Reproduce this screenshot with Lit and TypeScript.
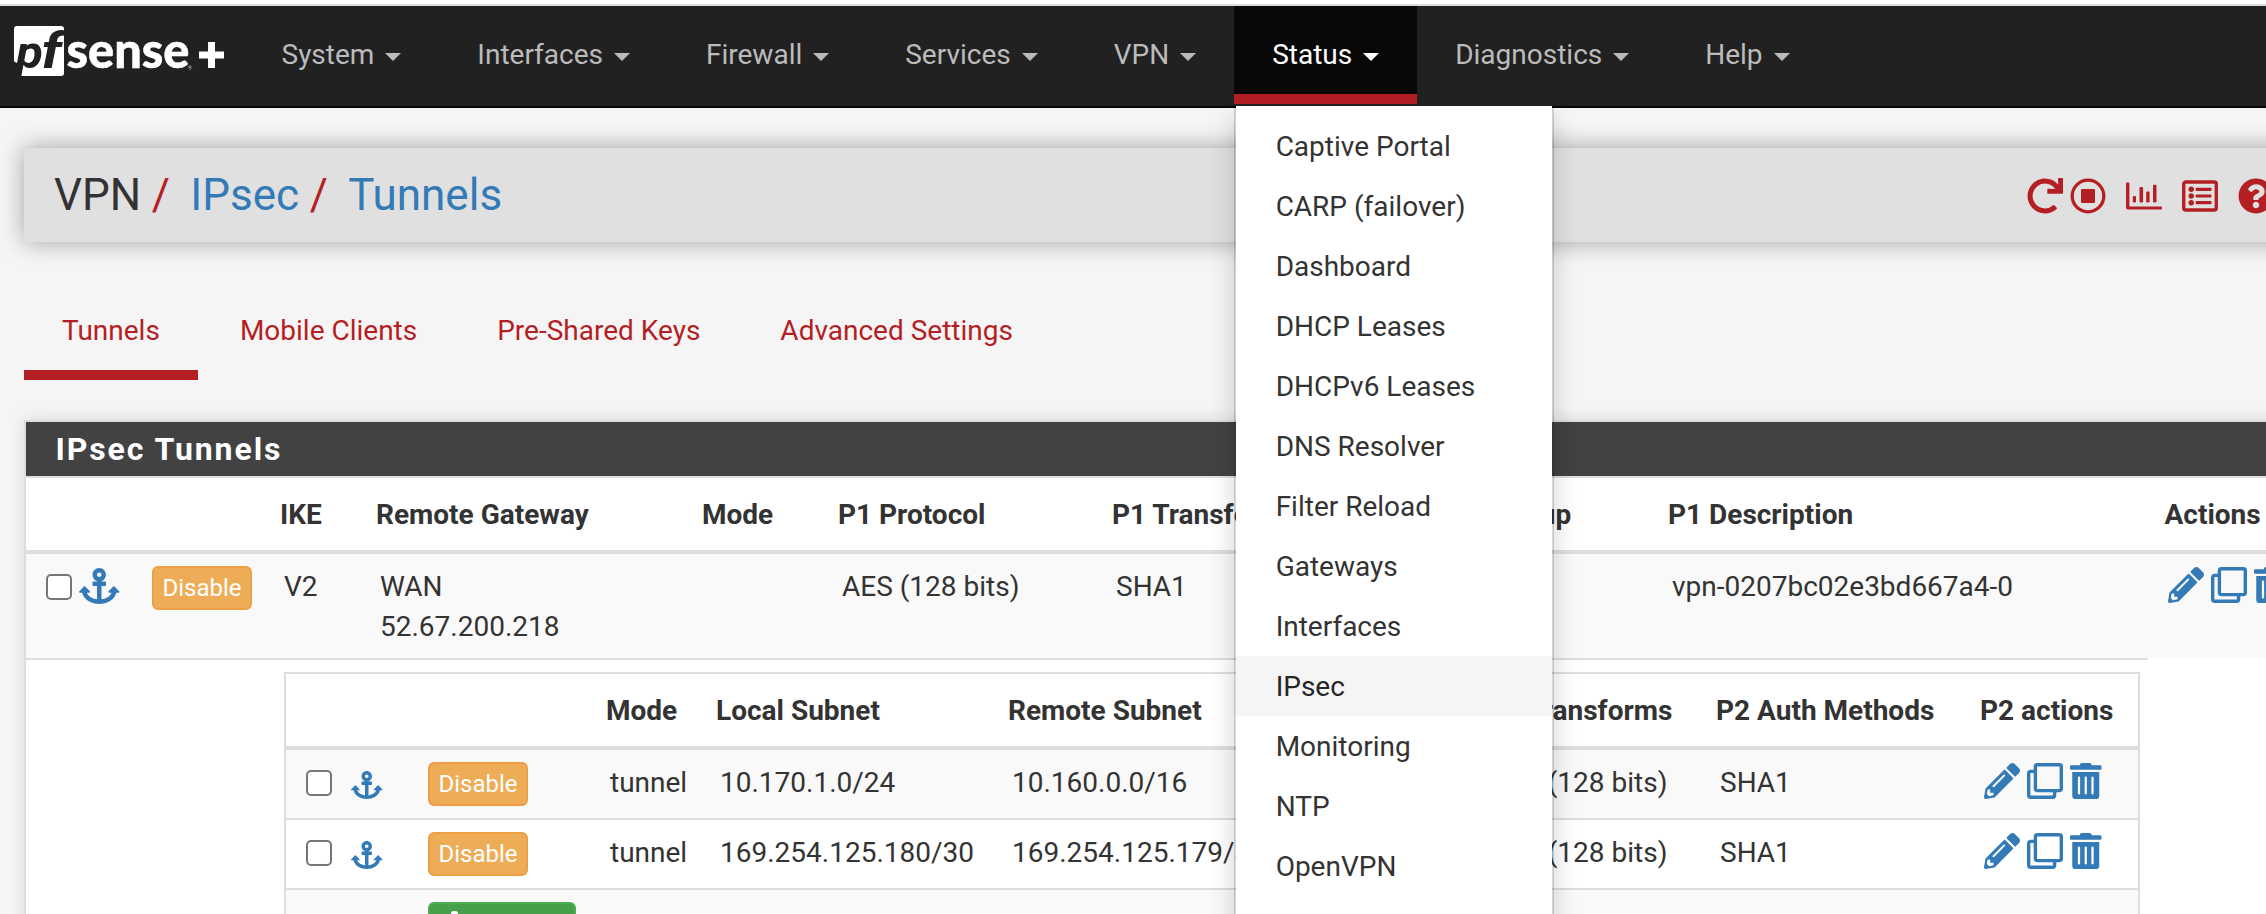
import { LitElement, html, css, svg, nothing } from "lit";
import { customElement, property } from "lit/decorators.js";

const ICONS: Record<string, { box: string; art: unknown }> = {
  redo: {
    box: "0 0 512 512",
    art: svg`<path d="M500.33 0h-47.41a12 12 0 0 0-12 12.57l4 82.76A247.42 247.42 0 0 0 256 8C119.34 8 7.9 119.53 8 256.19 8.1 393.07 119.1 504 256 504a247.1 247.1 0 0 0 166.18-63.91 12 12 0 0 0 .48-17.43l-34-34a12 12 0 0 0-16.38-.55A176 176 0 1 1 402.1 157.8l-101.53-4.87a12 12 0 0 0-12.57 12v47.41a12 12 0 0 0 12 12h200.33a12 12 0 0 0 12-12V12a12 12 0 0 0-12-12z"/>`,
  },
  stop: {
    box: "0 0 36 36",
    art: svg`<circle cx="18" cy="18" r="15.8" fill="none" stroke="currentColor" stroke-width="3.3"/><rect x="11" y="11" width="14" height="14" rx="1"/>`,
  },
  chart: {
    box: "0 0 36 36",
    art: svg`<path d="M0 5.5q0-1 1-1h1.400q1 0 1 1V28.500H35q1 0 1 1V30.500q0 1-1 1H2q-2 0-2-2z"/><rect x="6.800" y="18" width="3.200" height="6.600" rx="1"/><rect x="13.500" y="9" width="3.600" height="15.600" rx="1"/><rect x="20.200" y="13.500" width="3.400" height="11.100" rx="1"/><rect x="27" y="6.700" width="3.500" height="17.900" rx="1"/>`,
  },
  list: {
    box: "0 0 36 36",
    art: svg`<rect x="1.700" y="4" width="32.600" height="28" rx="2" fill="none" stroke="currentColor" stroke-width="3.400"/><circle cx="9.200" cy="11.300" r="2.700"/><circle cx="9.200" cy="18" r="2.700"/><circle cx="9.200" cy="24.700" r="2.700"/><rect x="13.700" y="9.700" width="15.800" height="3.200" rx=".8"/><rect x="13.700" y="16.400" width="15.800" height="3.200" rx=".8"/><rect x="13.700" y="23.100" width="15.800" height="3.200" rx=".8"/>`,
  },
  question: {
    box: "0 0 512 512",
    art: svg`<path d="M504 256c0 136.997-111.043 248-248 248S8 392.997 8 256C8 119.083 119.043 8 256 8s248 111.083 248 248zM262.655 90c-54.497 0-89.255 22.957-116.549 63.758-3.536 5.286-2.353 12.415 2.715 16.258l34.699 26.31c5.205 3.947 12.621 3.008 16.665-2.122 17.864-22.658 30.113-35.797 57.303-35.797 20.429 0 45.698 13.148 45.698 32.958 0 14.976-12.363 22.667-32.534 33.976C247.128 238.528 216 254.941 216 296v4c0 6.627 5.373 12 12 12h56c6.627 0 12-5.373 12-12v-1.333c0-28.462 83.186-29.647 83.186-106.667 0-58.002-60.165-102-116.531-102zM256 338c-25.365 0-46 20.635-46 46 0 25.364 20.635 46 46 46s46-20.636 46-46c0-25.365-20.635-46-46-46z"/>`,
  },
  anchor: {
    box: "0 0 576 512",
    art: svg`<path d="M12.971 352h32.394C67.172 454.735 181.944 512 288 512c106.229 0 220.853-57.38 242.635-160h32.394c10.691 0 16.045-12.926 8.485-20.485l-67.029-67.029c-4.686-4.686-12.284-4.686-16.971 0l-67.029 67.029c-7.56 7.56-2.206 20.485 8.485 20.485h35.146c-20.29 54.317-84.963 86.588-144.117 94.015V256h52c6.627 0 12-5.373 12-12v-40c0-6.627-5.373-12-12-12h-52v-5.47c37.281-13.226 63.995-48.779 64-90.577C384.011 43.148 341.026.128 288.199.001 235.08-.129 192 42.895 192 96c0 41.826 26.718 77.425 64 90.53V192h-52c-6.627 0-12 5.373-12 12v40c0 6.627 5.373 12 12 12h52v190.015c-58.936-7.399-123.82-39.679-144.117-94.015h35.146c10.691 0 16.045-12.926 8.485-20.485l-67.029-67.029c-4.686-4.686-12.284-4.686-16.971 0L4.485 331.515C-3.074 339.074 2.28 352 12.971 352zM288 64c17.645 0 32 14.355 32 32s-14.355 32-32 32-32-14.355-32-32 14.355-32 32-32z"/>`,
  },
  pencil: {
    box: "0 0 512 512",
    art: svg`<path d="M497.9 142.1l-46.1 46.1c-4.7 4.7-12.3 4.7-17 0l-111-111c-4.7-4.7-4.7-12.3 0-17l46.1-46.1c18.7-18.7 49.1-18.7 67.9 0l60.1 60.1c18.8 18.7 18.8 49.1 0 67.9zM284.2 99.8L21.6 362.4.4 483.9c-2.9 16.4 11.4 30.6 27.8 27.8l121.5-21.3 262.6-262.6c4.7-4.7 4.7-12.3 0-17l-111-111c-4.8-4.7-12.4-4.7-17.1 0zM124.1 339.9c-5.5-5.5-5.5-14.3 0-19.8l154-154c5.500-5.500 14.300-5.500 19.800 0s5.500 14.300 0 19.800l-154 154c-5.500 5.500-14.300 5.500-19.800 0zM88 424h48v36.300l-64.500 11.300-31.100-31.100L51.700 376H88v48z"/>`,
  },
  clone: {
    box: "0 0 36 36",
    art: svg`<path fill="none" stroke="currentColor" stroke-width="3.400" d="M8.400 8.400H3.700q-2 0-2 2V32.300q0 2 2 2H25.600q2 0 2-2V27.600"/><rect x="8.400" y="1.700" width="25.900" height="25.900" rx="2" fill="none" stroke="currentColor" stroke-width="3.400"/>`,
  },
  trash: {
    box: "0 0 448 512",
    art: svg`<path d="M32 464a48 48 0 0 0 48 48h288a48 48 0 0 0 48-48V128H32zm272-256a16 16 0 0 1 32 0v224a16 16 0 0 1-32 0zm-96 0a16 16 0 0 1 32 0v224a16 16 0 0 1-32 0zm-96 0a16 16 0 0 1 32 0v224a16 16 0 0 1-32 0zM432 32H312l-9.400-18.700A24 24 0 0 0 281.100 0H166.800a23.720 23.720 0 0 0-21.400 13.300L136 32H16A16 16 0 0 0 0 48v32a16 16 0 0 0 16 16h416a16 16 0 0 0 16-16V48a16 16 0 0 0-16-16z"/>`,
  },
  plus: {
    box: "0 0 24 24",
    art: svg`<rect x="9" y="0" width="6" height="24" rx="2"/><rect x="0" y="9" width="24" height="6" rx="2"/>`,
  },
};

@customElement("pf-icon")
class PfIcon extends LitElement {
  @property() name = "";
  static styles = css`
    :host { display: block; height: 36px; flex: none; }
    svg { display: block; height: 100%; width: auto; fill: currentColor; overflow: visible; }
  `;
  render() {
    const icon = ICONS[this.name];
    return icon ? html`<svg viewBox=${icon.box}>${icon.art}</svg>` : nothing;
  }
}

@customElement("pf-logo")
class PfLogo extends LitElement {
  static styles = css`
    :host { display: block; flex: none; }
    svg { display: block; }
    .sense { font: 900 49px Lato, sans-serif; fill: #fff; stroke: #fff; stroke-width: .5px; }
    .pf { font: italic 700 47px Roboto, sans-serif; fill: #212121; }
    .tall { font-size: 50px; }
    .reg { font: 5px Roboto, sans-serif; fill: #bbb; }
  `;
  render() {
    return html`<svg width="230" height="100" viewBox="0 0 230 100">
      <path fill="#fff" d="M17 20H61Q64 20 64 23V67Q64 70 61 70H19.500L14 64V23Q14 20 17 20z" />
      <path fill="#212121" d="M13 55L17 57 22 60 19 71H13z" />
      <text class="pf" x="16" y="61.500" textLength="27" lengthAdjust="spacingAndGlyphs">p</text>
      <text class="pf tall" x="41.500" y="61.500" textLength="20" lengthAdjust="spacingAndGlyphs">f</text>
      <text class="sense" x="66.500" y="61.500" textLength="123" lengthAdjust="spacingAndGlyphs">sense</text>
      <text class="reg" x="188" y="64">®</text>
      <path fill="#fff" d="M208 36H215V45.500H224V52.500H215V62H208V52.500H199V45.500H208z" />
    </svg>`;
  }
}

const NAV = ["System", "Interfaces", "Firewall", "Services", "VPN", "Status", "Diagnostics", "Help"];
const MENU = [
  "Captive Portal", "CARP (failover)", "Dashboard", "DHCP Leases", "DHCPv6 Leases", "DNS Resolver",
  "Filter Reload", "Gateways", "Interfaces", "IPsec", "Monitoring", "NTP", "OpenVPN",
];
const TABS = ["Tunnels", "Mobile Clients", "Pre-Shared Keys", "Advanced Settings"];
const P2_ROWS = [
  ["tunnel", "10.170.1.0/24", "10.160.0.0/16"],
  ["tunnel", "169.254.125.180/30", "169.254.125.179/30"],
];

@customElement("app-root")
class AppRoot extends LitElement {
  static styles = css`
    :host {
      display: block; height: 914px; overflow: hidden; position: relative;
      background: #f5f5f5; color: #333; font: 28px/40px Roboto, sans-serif;
    }
    * { box-sizing: border-box; }
    .edge { height: 6px; background: #fff; border-bottom: 2px solid #dadddb; }
    nav { display: flex; height: 102px; background: #212121; border-bottom: 2px solid #060606; color: #bbb; }
    .logo { width: 243.5px; }
    .item { position: relative; height: 98px; padding: 29px 38px 0; white-space: nowrap; }
    .caret {
      display: inline-block; margin-left: 4px; vertical-align: middle;
      border: 8px solid transparent; border-top-color: currentColor; border-bottom: 0;
    }
    .item.open { background: #080808; color: #fff; border-bottom: 10px solid #b41f24; }
    .menu {
      position: absolute; left: 0; top: 100px; width: 320px; height: 900px; z-index: 5;
      padding-top: 10px; color: #333; background: #fff; background-clip: padding-box;
      border: solid rgba(0, 0, 0, .15); border-width: 0 2px; box-shadow: 0 12px 24px rgba(0, 0, 0, .175);
    }
    .entry { padding: 11px 39.500px 9px; }
    .entry.hot { background: #f5f5f5; color: #262626; }
    .crumbs {
      display: flex; align-items: center; height: 94px; margin: 40px -60px 0 24px; padding: 0 0 0 30px;
      background: #e0e0e0; border-radius: 4px; box-shadow: 0 0 24px rgba(0, 0, 0, .35);
      font-size: 44px; color: #337ab7;
    }
    .crumbs .here { color: #333; }
    .crumbs .sep { color: #b41f24; margin: 0 20.5px 0 10.500px; }
    .tools { display: flex; margin-left: auto; color: #b41f24; padding: 1px 52px 0 0; }
    .tools pf-icon { margin-left: 20px; }
    .tools .near { margin-left: 7px; }
    .tabs { display: flex; height: 78px; margin: 60px 0 0 24px; color: #b41f24; }
    .tab { padding: 9px 38px 0; height: 78px; margin-right: 4px; }
    .tab.on { border-bottom: 10px solid #b41f24; }
    .panel {
      width: 2300px; margin: 40px 0 0 24px; border: 2px solid #ddd; border-bottom: 0;
      background: #fff; height: 600px; box-shadow: 0 0 16px rgba(0, 0, 0, .12);
    }
    .title {
      height: 56px; padding: 7px 0 0 29.500px; background: #424242; border-bottom: 2px solid #ddd;
      color: #fff; font-size: 32px; font-weight: 700; letter-spacing: 1.900px;
    }
    .row { display: grid; white-space: nowrap; }
    .p1 { grid-template-columns: 116px 126px 96px 326px 136px 274px 293px 263px 496.500px 1fr; }
    .p2 { grid-template-columns: 58px 74px 176px 110px 292px 232px 246px 230px 264px 1fr; }
    .head { height: 76px; border-bottom: 4px solid #ddd; font-weight: 700; }
    .head > div { padding: 17px 0 0 12px; }
    .body > div { padding: 13px 0 0 16px; }
    .p1.body { height: 104px; background: #f9f9f9; }
    .p2.body { height: 70px; border-bottom: 2px solid #ddd; }
    .p2.body:nth-child(even) { background: #f9f9f9; }
    .body > .boxes { display: flex; padding: 20px 0 0 20px; }
    .boxes .check + pf-icon { margin: -6px 0 0 7px; }
    .check { width: 26px; height: 26px; border: 2px solid #767676; border-radius: 5px; background: #fff; }
    pf-icon { color: #337ab7; }
    .tools pf-icon { color: inherit; }
    .body > .hook { padding: 21px 0 0 7px; }
    .small { height: 28px; }
    .body > .btncell { padding: 12px 0 0 10px; }
    .btn {
      display: flex; align-items: center; justify-content: center; width: 100px; height: 44px;
      border: 2px solid #ec9f45; border-radius: 6px; background: #eeac57; color: #fff;
      font-size: 24px; line-height: 36px;
    }
    .btn.add {
      background: #469f4b; border-color: #4cae50; width: 148px; gap: 20px;
      justify-content: flex-start; padding: 0 11px;
    }
    .btn.add pf-icon { color: #fff; height: 27px; }
    .acts { display: flex; gap: 7px; margin-left: -.500px; margin-top: -.500px; }
    .nested { margin-top: 12px; margin-left: 258px; width: 1856px; height: 400px; border: 2px solid #ddd; }
    .rule { width: 2122px; height: 2px; background: #ddd; }
  `;

  private actions() {
    return html`<div class="acts"><pf-icon name="pencil"></pf-icon><pf-icon name="clone"></pf-icon><pf-icon name="trash"></pf-icon></div>`;
  }

  render() {
    return html`
      <div class="edge"></div>
      <nav>
        <pf-logo class="logo"></pf-logo>
        ${NAV.map((n) => html`<div class="item ${n === "Status" ? "open" : ""}">${n} <span class="caret"></span>${n === "Status"
            ? html`<div class="menu">${MENU.map((m) => html`<div class="entry ${m === "IPsec" ? "hot" : ""}">${m}</div>`)}</div>`
            : nothing}</div>`)}
      </nav>
      <header class="crumbs">
        <span class="here">VPN</span><span class="sep">/</span><span>IPsec</span><span class="sep">/</span><span>Tunnels</span>
        <div class="tools">
          <pf-icon name="redo"></pf-icon><pf-icon class="near" name="stop"></pf-icon><pf-icon name="chart"></pf-icon
          ><pf-icon name="list"></pf-icon><pf-icon name="question"></pf-icon>
        </div>
      </header>
      <div class="tabs">${TABS.map((t, i) => html`<div class="tab ${i === 0 ? "on" : ""}">${t}</div>`)}</div>
      <section class="panel">
        <div class="title">IPsec Tunnels</div>
        <div class="row p1 head">
          <div></div><div></div><div>IKE</div><div>Remote Gateway</div><div>Mode</div><div>P1 Protocol</div>
          <div>P1 Transforms</div><div>P1 DH-Group</div><div>P1 Description</div><div>Actions</div>
        </div>
        <div class="row p1 body">
          <div class="boxes"><span class="check"></span><pf-icon name="anchor"></pf-icon></div>
          <div class="btncell"><span class="btn">Disable</span></div>
          <div>V2</div><div>WAN<br />52.67.200.218</div><div></div><div>AES (128 bits)</div><div>SHA1</div>
          <div></div><div>vpn-0207bc02e3bd667a4-0</div><div>${this.actions()}</div>
        </div>
        <div class="rule"></div>
        <div class="nested">
          <div class="row p2 head">
            <div></div><div></div><div></div><div>Mode</div><div>Local Subnet</div><div>Remote Subnet</div>
            <div></div><div>P2 Transforms</div><div>P2 Auth Methods</div><div>P2 actions</div>
          </div>
          ${P2_ROWS.map((r) => html`<div class="row p2 body">
            <div class="boxes"><span class="check"></span></div>
            <div class="hook"><pf-icon class="small" name="anchor"></pf-icon></div>
            <div class="btncell"><span class="btn">Disable</span></div>
            ${r.map((c) => html`<div>${c}</div>`)}
            <div></div><div>AES (128 bits)</div><div>SHA1</div><div>${this.actions()}</div>
          </div>`)}
          <div class="row p2 body">
            <div></div><div></div>
            <div class="btncell"><span class="btn add"><pf-icon name="plus"></pf-icon>Add P2</span></div>
          </div>
        </div>
      </section>
    `;
  }
}
